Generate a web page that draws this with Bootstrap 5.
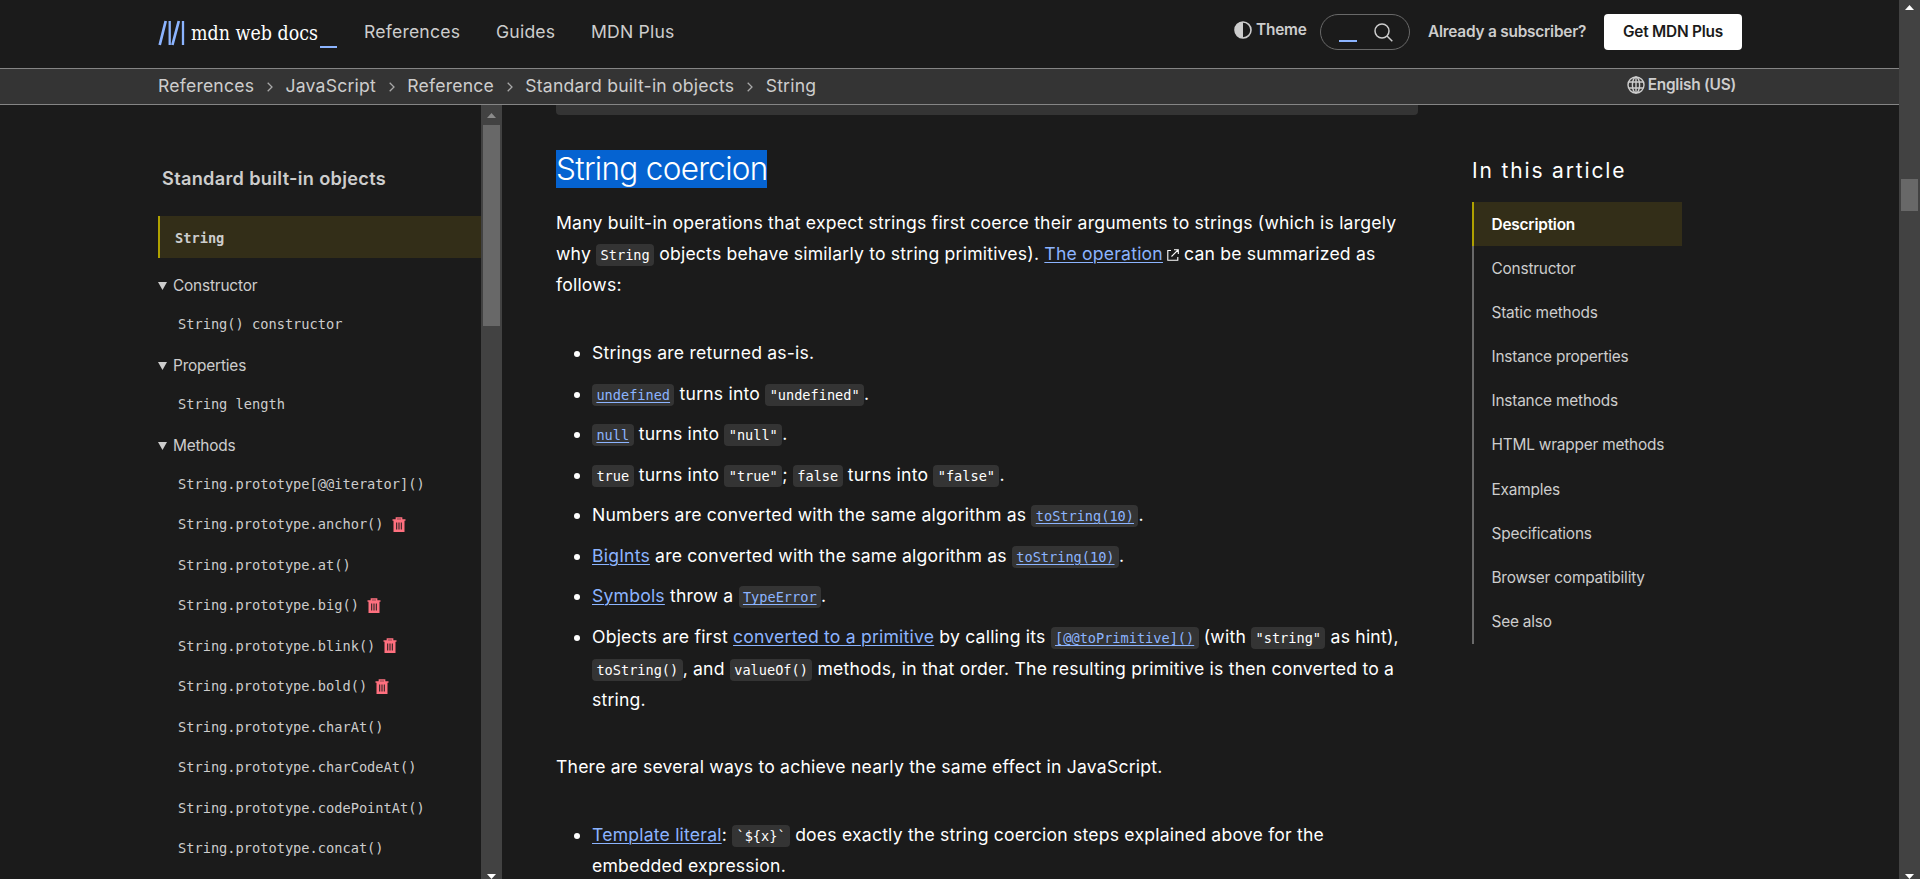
<!DOCTYPE html>
<html lang="en" data-bs-theme="dark">
<head>
<meta charset="utf-8">
<meta name="viewport" content="width=device-width, initial-scale=1">
<title>String - JavaScript | MDN</title>
<link href="https://cdn.jsdelivr.net/npm/bootstrap@5.3.0/dist/css/bootstrap.min.css" rel="stylesheet">
<style>
  :root { --page:#1b1b1b; --panel:#343434; --line:#858585; --soft:#cdcdcd; --link:#8cb4ff; --gold:#afa100; --gold-bg:#332e18; }
  body { font-family:Inter,"Liberation Sans",sans-serif; font-size:17.6px; letter-spacing:.2px; background:var(--page); color:#fff; }
  .mono { font-family:"DejaVu Sans Mono","Liberation Mono",monospace; font-size:13.66px; letter-spacing:0; }
  .topbar { height:69px; border-bottom:1px solid var(--line); padding:0 157px 4px 158px; color:var(--soft); }
  .crumbs { height:36px; background:var(--panel); border-bottom:1px solid var(--line); padding-left:158px; padding-right:163px; color:var(--soft); }
  .crumbs ol { line-height:34px; }
  .crumbs li svg { margin:0 12.7px; }
  .semi { font-weight:600; font-size:15.4px; letter-spacing:-.22px; }
  .main-nav { margin-left:26px; }
  .main-nav .wide { width:132px; }
  .main-nav .mid { width:95px; }
  .theme { width:86px; }
  .login { width:194px; padding-left:18px; }
  .pill { width:90px; height:36px; border:1px solid #696969; border-radius:18px; }
  .btn-plus { width:138px; height:36px; border-radius:4px; background:#fff; color:#1b1b1b; }
  .dash { height:2px; width:18px; margin:17px 17px 0 18px; background:var(--link); }
  .track { width:21px; background:#424242; flex:none; }
  .thumb { width:17px; background:#686868; margin:0 2px; }
  .side { width:323px; margin-left:158px; color:var(--soft); }
  .side-title { font-size:18.2px; font-weight:600; letter-spacing:.3px; line-height:24px; padding:61px 0 0 4px; margin-bottom:26px; }
  .current { height:42px; border-left:2px solid var(--gold); background:var(--gold-bg); padding-left:15px; margin-bottom:9.5px; font-weight:700; padding-top:2px; }
  .cat { height:36.2px; font-size:15.4px; letter-spacing:-.18px; }
  .cat svg { margin-right:6px; }
  .entry { height:40.5px; padding-left:20px; }
  .cat-gap { margin-bottom:3.3px; }
  .article { width:862px; margin-left:54px; }
  .codebox-end { height:10px; background:var(--panel); border-radius:0 0 4px 4px; margin-bottom:35px; }
  .article h3 { font-size:31.5px; font-weight:300; letter-spacing:-.7px; line-height:38px; margin-bottom:19px; }
  .picked { background:#0563d1; display:inline-block; width:211px; white-space:nowrap; }
  .article p { line-height:31px; white-space:nowrap; }
  .article a { color:var(--link); text-decoration:underline; text-underline-offset:2px; text-decoration-thickness:1px; }
  .article li { line-height:31.7px; margin-bottom:8.85px; white-space:nowrap; }
  .article li:last-child { margin-bottom:0; }
  .article ul { padding-left:36px; }
  .article code { font-family:"DejaVu Sans Mono","Liberation Mono",monospace; font-size:13.6px; letter-spacing:0; line-height:1; color:#fff; background:var(--panel); border-radius:4px; padding:3px 4.4px; }
  .toc { width:210px; margin-left:54px; }
  .toc h2 { font-size:21px; font-weight:400; letter-spacing:1.85px; line-height:26px; margin:53px 0 18px; white-space:nowrap; }
  .toc a { height:44.2px; padding-left:17.5px; border-left:2px solid #696969; font-size:15.4px; letter-spacing:-.2px; color:var(--soft); text-decoration:none; }
  .toc a.on { border-color:var(--gold); background:var(--gold-bg); color:#fff; font-weight:600; }
</style>
</head>
<body class="vh-100 overflow-hidden d-flex">
<div class="flex-grow-1 d-flex flex-column overflow-hidden">
  <header class="topbar d-flex align-items-center flex-shrink-0">
    <svg width="180" height="36" viewBox="158 14 180 36" class="flex-shrink-0">
      <g stroke="#8cb4ff" fill="none"><path d="M159.700 45 165.700 21M172.400 45 178.800 21" stroke-width="2.700"/><path d="M169.700 21V45M183 21V45" stroke-width="2.300"/></g>
      <text x="191" y="40" font-family="DejaVu Serif, serif" font-size="19.500" letter-spacing="0" fill="#fff" textLength="127" lengthAdjust="spacingAndGlyphs">mdn web docs</text>
      <rect x="320" y="46" width="17" height="2" fill="#8cb4ff"/>
    </svg>
    <nav class="main-nav d-flex flex-grow-1">
      <span class="wide">References</span><span class="mid">Guides</span><span>MDN Plus</span>
    </nav>
    <div class="d-flex align-items-center semi">
      <div class="theme d-flex align-items-center pb-1">
        <svg width="18" height="18" viewBox="0 0 18 18" class="me-1"><circle cx="9" cy="9" r="8" fill="none" stroke="#cdcdcd" stroke-width="1.6"/><path d="M9 1A8 8 0 0 0 9 17z" fill="#cdcdcd"/></svg>Theme
      </div>
      <div class="pill d-flex align-items-center">
        <span class="dash"></span>
        <svg width="19" height="19" viewBox="0 0 19 19" fill="none" stroke="#cdcdcd" stroke-width="1.5"><circle cx="8" cy="8" r="7"/><path d="m13 13 5.300 5.300"/></svg>
      </div>
      <span class="login text-nowrap">Already a subscriber?</span>
      <span class="btn-plus d-flex align-items-center justify-content-center">Get MDN Plus</span>
    </div>
  </header>
  <nav class="crumbs d-flex justify-content-between flex-shrink-0">
    <ol class="d-flex list-unstyled m-0">
      <li>References<svg width="6" height="10" viewBox="0 0 6 10" fill="none" stroke="#a8a8a8" stroke-width="1.3"><path d="m.7.7 4.3 4.3L.7 9.3"/></svg></li>
      <li>JavaScript<svg width="6" height="10" viewBox="0 0 6 10" fill="none" stroke="#a8a8a8" stroke-width="1.3"><path d="m.7.7 4.3 4.3L.7 9.3"/></svg></li>
      <li>Reference<svg width="6" height="10" viewBox="0 0 6 10" fill="none" stroke="#a8a8a8" stroke-width="1.3"><path d="m.7.7 4.3 4.3L.7 9.3"/></svg></li>
      <li>Standard built-in objects<svg width="6" height="10" viewBox="0 0 6 10" fill="none" stroke="#a8a8a8" stroke-width="1.3"><path d="m.7.7 4.3 4.3L.7 9.3"/></svg></li>
      <li>String</li>
    </ol>
    <div class="semi d-flex align-items-center pb-1"><svg width="18" height="18" viewBox="0 0 18 18" fill="none" stroke="#cdcdcd" stroke-width="1.4" style="margin-right:3px"><circle cx="9" cy="9" r="8"/><ellipse cx="9" cy="9" rx="3.6" ry="8"/><path d="M9 1v16M2 6h14M2 12h14"/></svg>English (US)</div>
  </nav>
  <div class="d-flex flex-grow-1 overflow-hidden">
    <aside class="side flex-shrink-0">
      <div class="side-title">Standard built-in objects</div>
      <div class="current mono d-flex align-items-center">String</div>
      <div class="cat d-flex align-items-center"><svg width="9" height="8"><path d="M0 0h9L4.5 8z" fill="#cdcdcd"/></svg>Constructor</div>
      <div class="entry mono d-flex align-items-center cat-gap">String() constructor</div>
      <div class="cat d-flex align-items-center"><svg width="9" height="8"><path d="M0 0h9L4.5 8z" fill="#cdcdcd"/></svg>Properties</div>
      <div class="entry mono d-flex align-items-center cat-gap">String length</div>
      <div class="cat d-flex align-items-center"><svg width="9" height="8"><path d="M0 0h9L4.5 8z" fill="#cdcdcd"/></svg>Methods</div>
      <div class="entry mono d-flex align-items-center">String.prototype[@@iterator]()</div>
      <div class="entry mono d-flex align-items-center">String.prototype.anchor()<svg class="ms-2" width="14" height="15"><use href="#trash"/></svg></div>
      <div class="entry mono d-flex align-items-center">String.prototype.at()</div>
      <div class="entry mono d-flex align-items-center">String.prototype.big()<svg class="ms-2" width="14" height="15"><use href="#trash"/></svg></div>
      <div class="entry mono d-flex align-items-center">String.prototype.blink()<svg class="ms-2" width="14" height="15"><use href="#trash"/></svg></div>
      <div class="entry mono d-flex align-items-center">String.prototype.bold()<svg class="ms-2" width="14" height="15"><use href="#trash"/></svg></div>
      <div class="entry mono d-flex align-items-center">String.prototype.charAt()</div>
      <div class="entry mono d-flex align-items-center">String.prototype.charCodeAt()</div>
      <div class="entry mono d-flex align-items-center">String.prototype.codePointAt()</div>
      <div class="entry mono d-flex align-items-center">String.prototype.concat()</div>
    </aside>
    <div class="track d-flex flex-column">
      <svg width="21" height="20" class="flex-shrink-0"><path d="M6 13h9l-4.500-5z" fill="#8b8b8b"/></svg>
      <div class="thumb flex-shrink-0" style="height:201px"></div>
      <svg width="21" height="5" class="mt-auto flex-shrink-0"><path d="M6 0h9l-4.500 5z" fill="#fff"/></svg>
    </div>
    <main class="article flex-shrink-0">
      <div class="codebox-end"></div>
      <h3><span class="picked">String coercion</span></h3>
      <p style="margin-bottom:37.2px">Many built-in operations that expect strings first coerce their arguments to strings (which is largely<br>why <code>String</code> objects behave similarly to string primitives). <a href="#">The operation</a><svg width="12" height="12" viewBox="0 0 12 12" fill="none" stroke="#fff" stroke-width="1.100" style="margin:0 5px 0 4px;vertical-align:-1px"><path d="M4 1.500H.8v9.700h10V8M7 .7h4.300V5M11 1 4.500 7.500"/></svg>can be summarized as<br>follows:</p>
      <ul style="margin-bottom:35px">
        <li>Strings are returned as-is.</li>
        <li><code><a href="#">undefined</a></code> turns into <code>"undefined"</code>.</li>
        <li><code><a href="#">null</a></code> turns into <code>"null"</code>.</li>
        <li><code>true</code> turns into <code>"true"</code>; <code>false</code> turns into <code>"false"</code>.</li>
        <li>Numbers are converted with the same algorithm as <code><a href="#">toString(10)</a></code>.</li>
        <li><a href="#">BigInts</a> are converted with the same algorithm as <code><a href="#">toString(10)</a></code>.</li>
        <li><a href="#">Symbols</a> throw a <code><a href="#">TypeError</a></code>.</li>
        <li>Objects are first <a href="#">converted to a primitive</a> by calling its <code><a href="#">[@@toPrimitive]()</a></code> (with <code>"string"</code> as hint),<br><code>toString()</code>, and <code>valueOf()</code> methods, in that order. The resulting primitive is then converted to a<br>string.</li>
      </ul>
      <p style="margin-bottom:36.7px">There are several ways to achieve nearly the same effect in JavaScript.</p>
      <ul class="mb-0">
        <li style="line-height:31px"><a href="#">Template literal</a>: <code>`${x}`</code> does exactly the string coercion steps explained above for the<br>embedded expression.</li>
      </ul>
    </main>
    <aside class="toc flex-shrink-0">
      <h2>In this article</h2>
      <nav>
        <a href="#" class="on d-flex align-items-center">Description</a>
        <a href="#" class="d-flex align-items-center">Constructor</a>
        <a href="#" class="d-flex align-items-center">Static methods</a>
        <a href="#" class="d-flex align-items-center">Instance properties</a>
        <a href="#" class="d-flex align-items-center">Instance methods</a>
        <a href="#" class="d-flex align-items-center">HTML wrapper methods</a>
        <a href="#" class="d-flex align-items-center">Examples</a>
        <a href="#" class="d-flex align-items-center">Specifications</a>
        <a href="#" class="d-flex align-items-center">Browser compatibility</a>
        <a href="#" class="d-flex align-items-center">See also</a>
      </nav>
    </aside>
  </div>
</div>
<div class="track d-flex flex-column">
  <svg width="21" height="179" class="flex-shrink-0"><path d="M6 10h9l-4.500-5z" fill="#fff"/></svg>
  <div class="thumb" style="height:32px"></div>
  <svg width="21" height="5" class="mt-auto flex-shrink-0"><path d="M6 0h9l-4.500 5z" fill="#fff"/></svg>
</div>
<svg width="0" height="0" class="position-absolute"><symbol id="trash" viewBox="0 0 14 15"><path d="M4.300 2.500V1h5.400v1.500M.5 3h13" fill="none" stroke="#ff707f" stroke-width="1.300"/><path d="M1.500 3h11v12h-11zM4.200 5.500v7h1v-7zM6.500 5.500v7h1v-7zM8.800 5.500v7h1v-7z" fill="#ff707f" fill-rule="evenodd"/></symbol></svg>
<script src="https://cdn.jsdelivr.net/npm/bootstrap@5.3.0/dist/js/bootstrap.bundle.min.js"></script>
</body>
</html>
